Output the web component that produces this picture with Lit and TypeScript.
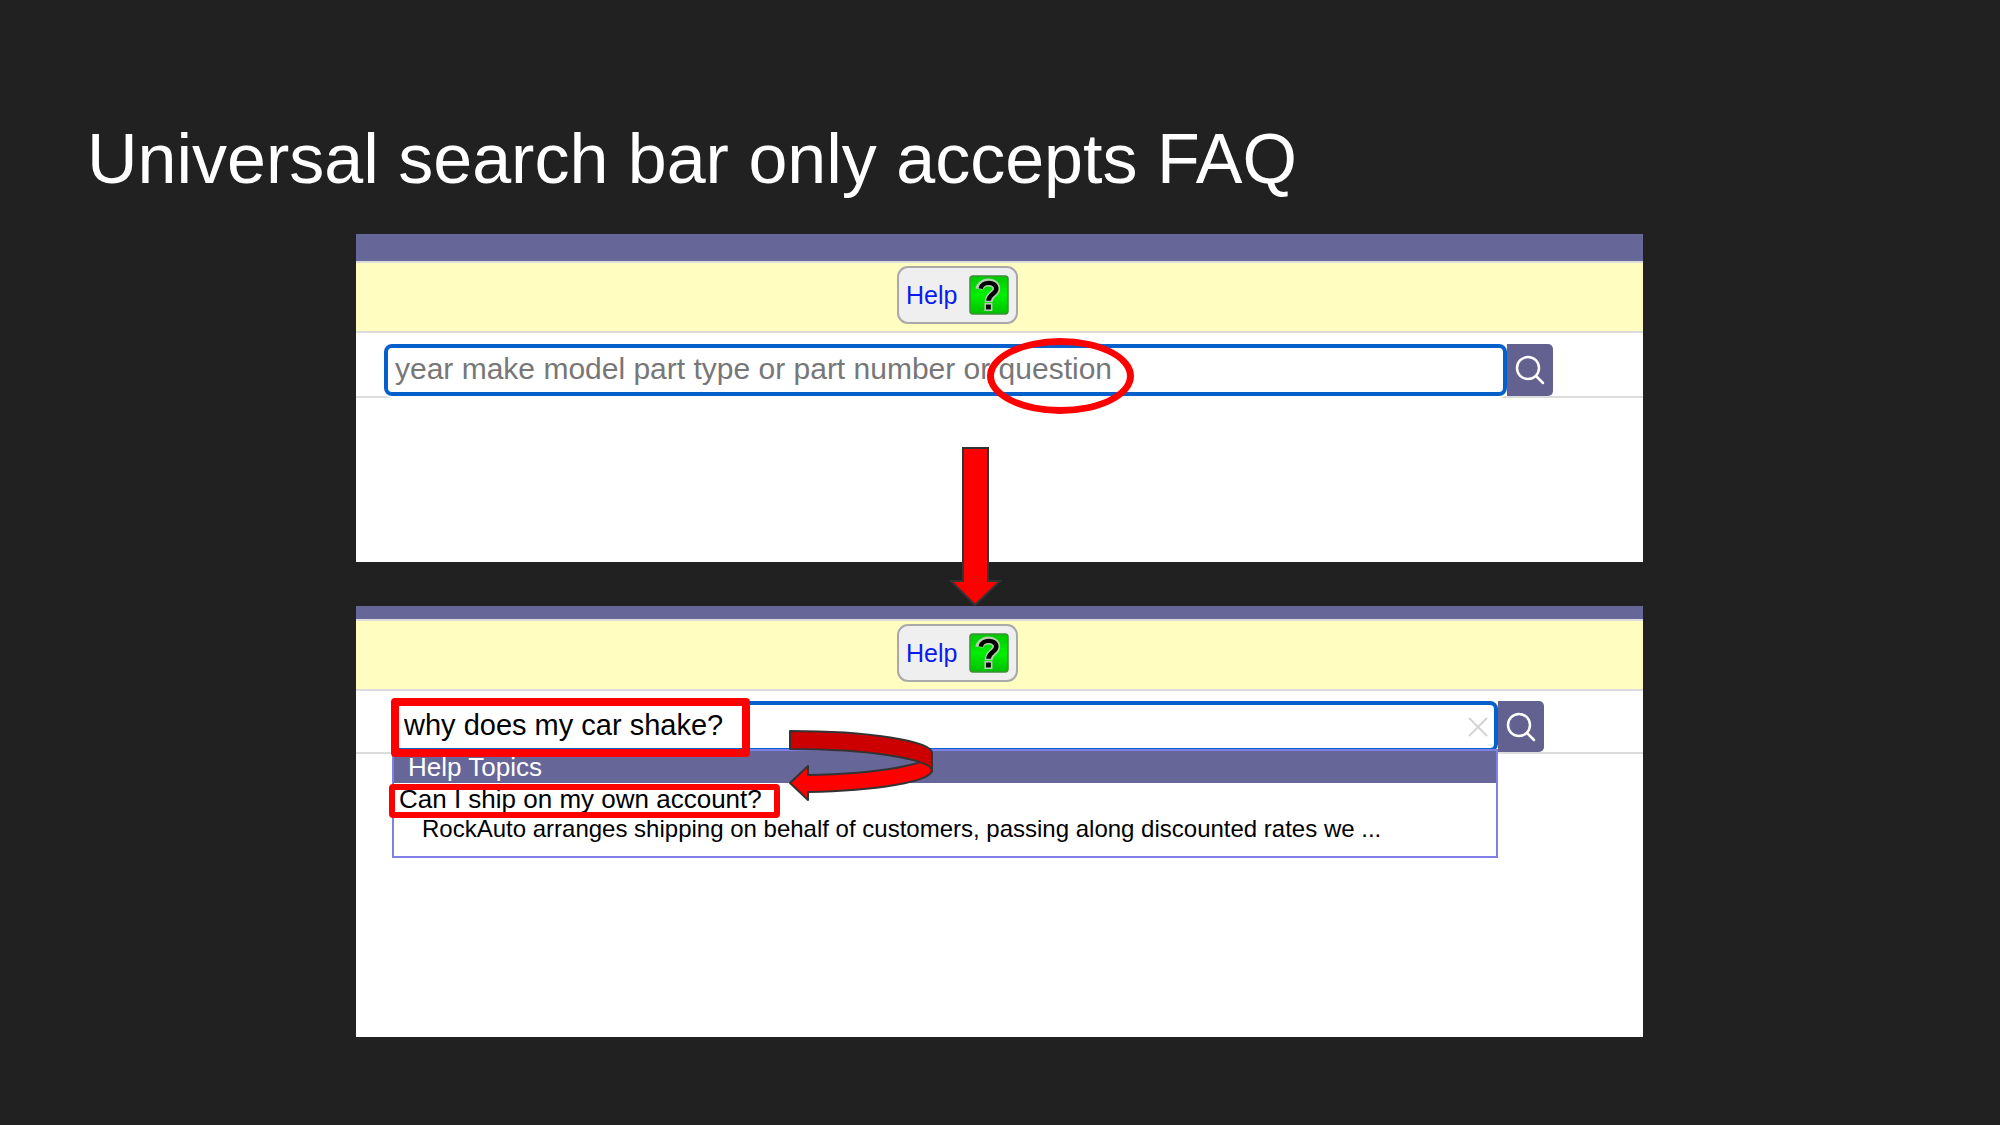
import { LitElement, html, css, svg } from "lit";
import { customElement } from "lit/decorators.js";

const magnifier = svg`<circle cx="12" cy="12" r="11"></circle><path d="M20 20 L27 27"></path>`;

@customElement("help-button")
export class HelpButton extends LitElement {
  static styles = css`
    :host {
      display: block;
    }
    .help {
      display: flex;
      align-items: center;
      gap: 12px;
      box-sizing: border-box;
      height: 58px;
      padding: 0 7px;
      border: 2px solid #a9a9a9;
      border-radius: 11px;
      background: #efefef;
      color: #0a1af0;
      font: 25px/30px "Liberation Sans", Arial, sans-serif;
    }
    .icon {
      display: block;
      width: 40px;
      height: 40px;
    }
    .tile {
      fill: url(#green);
      stroke: #3f8f3a;
      stroke-width: 1.5;
    }
    .halo,
    .hook {
      fill: none;
      stroke: #b4d0b0;
      stroke-width: 8;
    }
    .hook {
      stroke: #000;
      stroke-width: 4.6;
    }
    .dot {
      fill: #000;
      stroke: #b4d0b0;
      stroke-width: 1.6;
    }
  `;

  render() {
    return html`
      <button class="help" type="button">
        Help
        <svg class="icon" viewBox="0 0 41 41" aria-hidden="true">
          <defs>
            <linearGradient id="green" x1="0" y1="0" x2="0" y2="1">
              <stop offset="0" stop-color="#00c800"></stop>
              <stop offset="0.5" stop-color="#00f000"></stop>
              <stop offset="1" stop-color="#00c000"></stop>
            </linearGradient>
          </defs>
          <rect class="tile" x="1" y="1" width="39" height="39" rx="3"></rect>
          <path class="halo" d="M10.5 14.500 C12 5.500 28 5.500 28 14 C28 19.500 20 19.500 20 28"></path>
          <rect class="dot" x="16.600" y="29.500" width="6.600" height="6.600"></rect>
          <path class="hook" d="M12 14 C13 6.200 28 6 28 14 C28 19.500 20 19.500 20 26.500"></path>
        </svg>
      </button>
    `;
  }
}

@customElement("app-root")
export class AppRoot extends LitElement {
  static styles = css`
    :host {
      display: block;
      min-height: 100vh;
      background: #212121;
      font-family: "Liberation Sans", Arial, sans-serif;
    }
    .slide {
      box-sizing: border-box;
      padding: 119px 0 88px;
    }
    .title {
      margin: 0;
      padding: 0 87px;
      color: #fff;
      font-size: 70px;
      font-weight: 400;
      line-height: 80px;
    }
    .stage {
      position: relative;
      display: flex;
      flex-direction: column;
      gap: 44px;
      margin: 35px 357px 0 356px;
    }
    .panel {
      background: #fff;
    }
    .first {
      height: 328px;
    }
    .second {
      height: 431px;
    }
    .band {
      height: 27px;
      background: #666699;
    }
    .second .band {
      height: 13px;
    }
    .banner {
      display: flex;
      padding: 3px 0 7px 541px;
      border-top: 2px solid #dcdcdc;
      border-bottom: 2px solid #dcdcdc;
      background: #fffdc0;
    }
    .row {
      display: flex;
      padding: 11px 90px 0 28px;
      border-bottom: 2px solid #dcdcdc;
    }
    .second .row {
      padding: 10px 99px 0 36px;
    }
    .field {
      position: relative;
      flex: 1;
      display: flex;
      height: 52px;
    }
    .second .field {
      height: 51px;
    }
    .input {
      flex: 1;
      min-width: 0;
      box-sizing: border-box;
      height: 100%;
      margin: 0;
      padding: 0 7px 2px;
      border: 4px solid #0560cc;
      border-radius: 8px;
      outline: none;
      background: #fff;
      box-shadow: 0 0 0 2px #fff;
      color: #000;
      font: 30px/36px "Liberation Sans", Arial, sans-serif;
    }
    .input::placeholder {
      color: #777;
      opacity: 1;
    }
    .second .input {
      padding: 0 8px 2px;
      font-size: 29px;
    }
    .go {
      position: relative;
      display: flex;
      align-items: center;
      justify-content: center;
      width: 46px;
      padding: 0;
      border: 0;
      border-radius: 0 5px 5px 0;
      background: #62618f;
    }
    .glass {
      width: 28px;
      height: 28px;
      overflow: visible;
      fill: none;
      stroke: #fff;
      stroke-width: 2.5;
      stroke-linecap: round;
    }
    .clear {
      position: absolute;
      top: 16px;
      right: 10px;
      width: 20px;
      height: 20px;
      padding: 0;
      border: 0;
      background: none;
    }
    .cross {
      display: block;
      width: 20px;
      height: 20px;
      fill: none;
      stroke: #d4d4d4;
      stroke-width: 2;
    }
    .menu {
      position: absolute;
      top: 48px;
      left: 0;
      right: 0;
      box-sizing: border-box;
      height: 109px;
      border: 2px solid #7f7fe6;
      background: #fff;
      color: #000;
    }
    .heading {
      margin: 0;
      padding: 1px 0 0 14px;
      background: #666699;
      color: #fff;
      font-size: 26px;
      font-weight: 400;
      line-height: 31px;
    }
    .topic {
      display: block;
      color: #000;
      text-decoration: none;
    }
    .question {
      display: block;
      padding-left: 5px;
      font-size: 26px;
      line-height: 32px;
    }
    .answer {
      display: block;
      padding-left: 28px;
      font-size: 24px;
      line-height: 28px;
      white-space: nowrap;
    }
    .box {
      position: absolute;
      box-sizing: border-box;
      border: 8px solid #f00;
      border-radius: 4px;
      pointer-events: none;
    }
    .typed {
      top: -3px;
      left: -1px;
      width: 359px;
      height: 59px;
    }
    .result {
      top: 83px;
      left: -3px;
      width: 391px;
      height: 34px;
      border-width: 6px;
    }
    .ring {
      position: absolute;
      top: -6px;
      left: 603px;
      box-sizing: border-box;
      width: 147px;
      height: 76px;
      border: 7px solid #f00;
      border-radius: 50%;
      pointer-events: none;
    }
    .down,
    .loop {
      position: absolute;
      overflow: visible;
      fill: #f00;
      stroke: #333;
      stroke-width: 2;
      pointer-events: none;
    }
    .down {
      top: 213px;
      left: 593px;
      width: 52px;
      height: 159px;
    }
    .loop {
      top: 30px;
      left: 397px;
      width: 143px;
      height: 69px;
      stroke-linejoin: round;
    }
    .back {
      fill: #c00;
    }
  `;

  render() {
    return html`
      <main class="slide">
        <h1 class="title">Universal search bar only accepts FAQ</h1>
        <div class="stage">
          <section class="panel first">
            <div class="band"></div>
            <div class="banner"><help-button></help-button></div>
            <form class="row" @submit=${this.hold}>
              <div class="field">
                <input
                  class="input"
                  type="text"
                  aria-label="Search parts"
                  placeholder="year make model part type or part number or question"
                />
                <span class="ring"></span>
              </div>
              <button class="go" aria-label="Search">
                <svg class="glass" viewBox="0 0 28 28">${magnifier}</svg>
              </button>
            </form>
          </section>

          <section class="panel second">
            <div class="band"></div>
            <div class="banner"><help-button></help-button></div>
            <form class="row" @submit=${this.hold}>
              <div class="field">
                <input class="input" type="text" aria-label="Search parts" value="why does my car shake?" />
                <button class="clear" type="button" aria-label="Clear">
                  <svg class="cross" viewBox="0 0 20 20"><path d="M1 1 L19 19 M19 1 L1 19"></path></svg>
                </button>
                <div class="menu">
                  <h2 class="heading">Help Topics</h2>
                  <a class="topic" href="#shipping">
                    <span class="question">Can I ship on my own account?</span>
                    <span class="answer"
                      >RockAuto arranges shipping on behalf of customers, passing along discounted rates we ...</span
                    >
                  </a>
                </div>
                <span class="box typed"></span>
                <span class="box result"></span>
                <svg class="loop" viewBox="0 0 143 69" aria-hidden="true">
                  <path d="M143 40 A142 22 0 0 1 19 61 V69 L1 52 L19 35 V44 A142 22 0 0 0 143 22 Z"></path>
                  <path class="back" d="M1 0 A142 22 0 0 1 143 22 V40 A142 22 0 0 0 1 18 Z"></path>
                </svg>
              </div>
              <button class="go" aria-label="Search">
                <svg class="glass" viewBox="0 0 28 28">${magnifier}</svg>
              </button>
            </form>
          </section>

          <svg class="down" viewBox="0 0 52 159" aria-hidden="true">
            <path d="M14 1 H39 V134 H51 L26 158 L2 134 H14 Z"></path>
          </svg>
        </div>
      </main>
    `;
  }

  private hold(event: Event) {
    event.preventDefault();
  }
}
